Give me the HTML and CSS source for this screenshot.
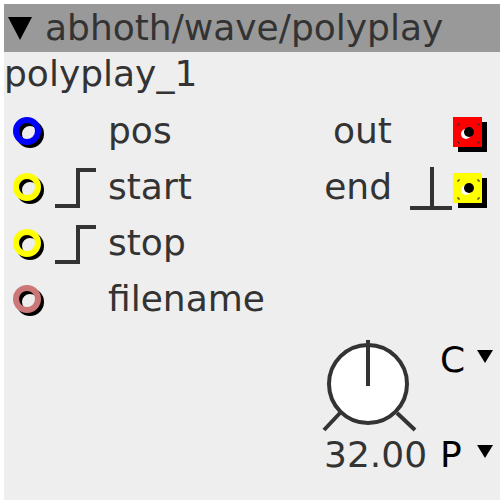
FILE: index.html
```html
<!DOCTYPE html>
<html lang="en">
<head>
    <meta charset="UTF-8">
    <title>polyplay_1</title>
    <link rel="stylesheet" href="styles.css">
</head>
<body>
    <div class="object">
        <div class="title">
            <svg class="collapse" width="32" height="48" viewBox="0 0 32 48"><polygon points="4,13 28,13 16,36" fill="#000"/></svg>
            <span class="type">abhoth/wave/polyplay</span>
        </div>
        <div class="name">polyplay_1</div>

        <div class="row">
            <svg class="jack" width="100" height="56" viewBox="0 0 100 56">
                <circle cx="26" cy="31" r="11" fill="none" stroke="#000" stroke-width="6"/>
                <circle cx="23" cy="28" r="11" fill="none" stroke="#0000ff" stroke-width="6"/>
            </svg>
            <span class="label">pos</span>
            <div class="out">
                <span class="label">out</span>
                <svg class="outjack" width="100" height="56" viewBox="0 0 100 56">
                    <rect x="58" y="19" width="29" height="30" fill="#000"/>
                    <rect x="53" y="14" width="29" height="30" fill="#ff0000"/>
                    <path d="M58 21h2M58 21v2M77 21h2M79 21v2M58 38v2M58 40h2M79 38v2M77 40h2" stroke="#333" stroke-width="1" fill="none"/>
                    <circle cx="66" cy="31" r="5" fill="#fff"/>
                    <circle cx="69" cy="29" r="5" fill="#000"/>
                </svg>
            </div>
        </div>

        <div class="row">
            <svg class="jack" width="100" height="56" viewBox="0 0 100 56">
                <circle cx="26" cy="31" r="11" fill="none" stroke="#000" stroke-width="6"/>
                <circle cx="23" cy="28" r="11" fill="none" stroke="#ffff00" stroke-width="6"/>
                <polyline points="51,47 74,47 74,11 92,11" fill="none" stroke="#333" stroke-width="4"/>
            </svg>
            <span class="label">start</span>
            <div class="out">
                <span class="label">end</span>
                <svg class="outjack" width="100" height="56" viewBox="0 0 100 56">
                    <path d="M32 8V49M10 49H52" stroke="#333" stroke-width="4" fill="none"/>
                    <rect x="58" y="19" width="29" height="30" fill="#000"/>
                    <rect x="53" y="14" width="29" height="30" fill="#ffff00"/>
                    <path d="M58 21h2M58 21v2M77 21h2M79 21v2M58 38v2M58 40h2M79 38v2M77 40h2" stroke="#333" stroke-width="1" fill="none"/>
                    <circle cx="66" cy="31" r="5" fill="#fff"/>
                    <circle cx="69" cy="29" r="5" fill="#000"/>
                </svg>
            </div>
        </div>

        <div class="row">
            <svg class="jack" width="100" height="56" viewBox="0 0 100 56">
                <circle cx="26" cy="31" r="11" fill="none" stroke="#000" stroke-width="6"/>
                <circle cx="23" cy="28" r="11" fill="none" stroke="#ffff00" stroke-width="6"/>
                <polyline points="51,47 74,47 74,12 92,12" fill="none" stroke="#333" stroke-width="4"/>
            </svg>
            <span class="label">stop</span>
        </div>

        <div class="row">
            <svg class="jack" width="100" height="56" viewBox="0 0 100 56">
                <circle cx="26" cy="31" r="11" fill="none" stroke="#000" stroke-width="6"/>
                <circle cx="23" cy="28" r="11" fill="none" stroke="#cc7777" stroke-width="6"/>
            </svg>
            <span class="label">filename</span>
        </div>

        <div class="controls">
            <div class="knob">
                <svg width="100" height="98" viewBox="0 0 100 98">
                    <circle cx="48" cy="48" r="39" fill="#fff" stroke="#333" stroke-width="4"/>
                    <path d="M48 4V50M4 94L20 77M77 77L95 94" stroke="#333" stroke-width="4" fill="none"/>
                </svg>
                <div class="value">32.00</div>
            </div>
            <div class="selects">
                <div class="select">
                    <span class="sel-label">C</span>
                    <svg width="30" height="42" viewBox="0 0 30 42"><polygon points="12,11 28,11 20,24" fill="#000"/></svg>
                </div>
                <div class="select">
                    <span class="sel-label">P</span>
                    <svg width="30" height="42" viewBox="0 0 30 42"><polygon points="12,11 28,11 20,24" fill="#000"/></svg>
                </div>
            </div>
        </div>
    </div>
</body>
</html>
```

FILE: styles.css
```css
body {
    margin: 0;
    padding: 4px;
    background: #fff;
    font-family: 'DejaVu Sans', sans-serif;
    font-size: 36px;
    color: #333;
}
.object {
    width: 496px;
    height: 496px;
    background-color: #eeeeee;
    overflow: hidden;
}
.title {
    display: flex;
    align-items: center;
    height: 48px;
    background-color: #999999;
    line-height: 48px;
}
.collapse {
    display: block;
    flex: none;
}
.type {
    margin-left: 9px;
}
.name {
    height: 51px;
    line-height: 44px;
}
.row {
    display: flex;
    align-items: center;
    height: 56px;
    line-height: 56px;
}
.jack {
    display: block;
    flex: none;
}
.label {
    margin-left: 4px;
}
.out {
    display: flex;
    align-items: center;
    margin-left: auto;
}
.out .label {
    margin-right: 8px;
}
.outjack {
    display: block;
}
.controls {
    display: flex;
    padding: 9px 0 0 316px;
}
.knob {
    width: 120px;
}
.knob svg {
    display: block;
}
.value {
    line-height: 42px;
    margin-left: 4px;
}
.selects {
    display: flex;
    flex-direction: column;
    gap: 53px;
    padding-top: 3px;
}
.select {
    display: flex;
    height: 42px;
    line-height: 42px;
    color: #000;
}
.sel-label {
    width: 25px;
}
.select svg {
    display: block;
}
```
